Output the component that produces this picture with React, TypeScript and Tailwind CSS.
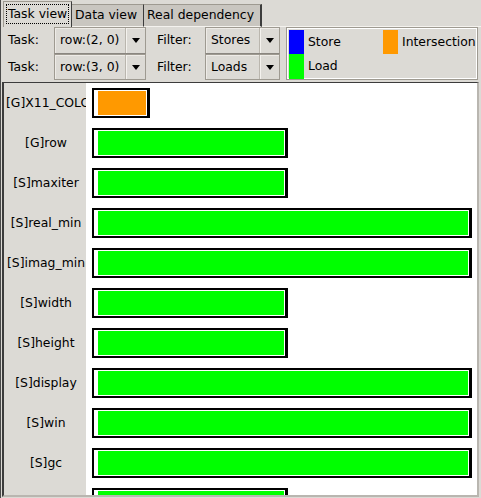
import React from 'react';

const rows: { label: string; color: string; width: number }[] = [
  { label: '[G]X11_COLORS', color: 'bg-[#ff9900]', width: 58 },
  { label: '[G]row', color: 'bg-[#00ff00]', width: 196 },
  { label: '[S]maxiter', color: 'bg-[#00ff00]', width: 196 },
  { label: '[S]real_min', color: 'bg-[#00ff00]', width: 380 },
  { label: '[S]imag_min', color: 'bg-[#00ff00]', width: 380 },
  { label: '[S]width', color: 'bg-[#00ff00]', width: 196 },
  { label: '[S]height', color: 'bg-[#00ff00]', width: 196 },
  { label: '[S]display', color: 'bg-[#00ff00]', width: 380 },
  { label: '[S]win', color: 'bg-[#00ff00]', width: 380 },
  { label: '[S]gc', color: 'bg-[#00ff00]', width: 380 },
  { label: '[S]pixel', color: 'bg-[#00ff00]', width: 196 },
];

function Arrow() {
  return (
    <svg width="8" height="5" viewBox="0 0 8 5" className="block">
      <polygon points="0,0 8,0 4,5" fill="#000" />
    </svg>
  );
}

function Combo({ value, width, last }: { value: string; width: string; last?: boolean }) {
  return (
    <div
      className={`${width} h-full flex items-stretch border border-[#9e9a91] ${last ? '' : 'border-b-[#8a8680]'} bg-[#dcdad5] shadow-[inset_1px_1px_0_#eeebe7]`}
    >
      <div className="flex-1 flex items-center pl-[5px] overflow-hidden whitespace-nowrap">{value}</div>
      <div className="w-[19px] flex items-center justify-center border-l border-l-[#f4f2ee] shadow-[-1px_0_0_#bab6ae]">
        <Arrow />
      </div>
    </div>
  );
}

export default function App() {
  return (
    <div
      className="w-[481px] h-[498px] bg-[#dcdad5] border-l border-[#4a4a4a] overflow-hidden text-black text-[12.4px] leading-none"
      style={{ fontFamily: '"DejaVu Sans", Verdana, sans-serif' }}
    >
      {/* tabs */}
      <div className="h-[27px] flex items-end pl-[2px]">
        <div className="w-[69px] h-[26px] bg-[#dcdad5] border-l border-t border-[#9e9a91] border-r border-r-[#3c3c3c] flex items-start pt-[2px] pl-[2px]">
          <div className="border border-dotted border-black px-[1px] h-[20px] flex items-center whitespace-nowrap">Task view</div>
        </div>
        <div className="w-[72px] h-[23px] bg-[#c9c6c0] border-t border-[#9e9a91] border-r border-r-[#3c3c3c] border-b border-b-[#f4f2ee] flex items-center pl-[3px] whitespace-nowrap">
          Data view
        </div>
        <div className="w-[118px] h-[23px] bg-[#c9c6c0] border-t border-[#9e9a91] border-r-2 border-r-[#3c3c3c] border-b border-b-[#f4f2ee] flex items-center pl-[3px] whitespace-nowrap">
          Real dependency
        </div>
        <div className="flex-1 h-px bg-[#f4f2ee]" />
      </div>

      {/* controls */}
      <div className="h-[53px] flex">
        <div className="flex flex-col">
          <div className="h-[27px] flex items-stretch pl-[7px]">
            <div className="w-[46px] flex items-center">Task:</div>
            <Combo value="row:(2, 0)" width="w-[92px]" />
            <div className="w-[59px] flex items-center pl-[11px]">Filter:</div>
            <Combo value="Stores" width="w-[75px]" />
          </div>
          <div className="h-[26px] flex items-stretch pl-[7px]">
            <div className="w-[46px] flex items-center">Task:</div>
            <Combo value="row:(3, 0)" width="w-[92px]" last />
            <div className="w-[59px] flex items-center pl-[11px]">Filter:</div>
            <Combo value="Loads" width="w-[75px]" last />
          </div>
        </div>
        <div className="ml-[6px] w-[192px] h-[53px] border border-[#9e9a91] shadow-[inset_0_0_0_1px_#ffffff] p-[2px] grid grid-cols-[94px_1fr] grid-rows-[24px_25px]">
          <div className="flex items-center">
            <div className="w-[15px] h-full bg-[#0000ff]" />
            <span className="ml-[4px]">Store</span>
          </div>
          <div className="flex items-center">
            <div className="w-[15px] h-full bg-[#ff9900]" />
            <span className="ml-[4px]">Intersection</span>
          </div>
          <div className="flex items-center">
            <div className="w-[15px] h-full bg-[#00ff00]" />
            <span className="ml-[4px]">Load</span>
          </div>
          <div />
        </div>
      </div>

      {/* canvas */}
      <div className="mt-[2px] ml-px w-[477px] h-[415px] border-t border-l-2 border-[#3c3c3c] border-r-2 border-b-2 border-r-[#b9b6b0] border-b-[#b9b6b0] overflow-hidden flex">
        <div className="w-[82px] shrink-0 bg-[#dcdad5] flex flex-col">
          {rows.map((r) => (
            <div
              key={r.label}
              className="h-[40px] shrink-0 flex items-center [justify-content:safe_center] pl-[2px] overflow-hidden whitespace-nowrap"
            >
              {r.label}
            </div>
          ))}
        </div>
        <div className="flex-1 bg-white flex flex-col">
          {rows.map((r) => (
            <div key={r.label} className="h-[40px] shrink-0 flex items-center pl-[6px]">
              <div
                className="h-[30px] border-2 border-black border-r-[3px] bg-white pl-[4px] pr-[1px] py-px"
                style={{ width: r.width }}
              >
                <div className={`w-full h-full ${r.color}`} />
              </div>
            </div>
          ))}
        </div>
      </div>
    </div>
  );
}
